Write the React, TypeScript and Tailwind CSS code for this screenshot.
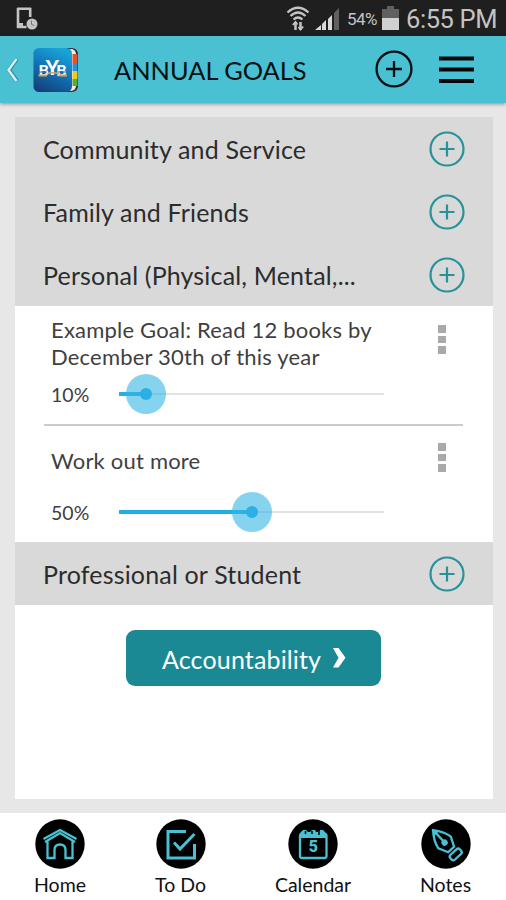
import clsx from 'clsx'
import type { ReactNode } from 'react'

type Goal = { title: string; percent: number }

const goals: Goal[] = [
  { title: 'Example Goal: Read 12 books by December 30th of this year', percent: 10 },
  { title: 'Work out more', percent: 50 },
]

function StatusBar() {
  return (
    <div className="flex h-9 items-center bg-[#1f1f1f] pl-4 pr-[9px] text-[#c4c4c4]">
      <svg width="22" height="24" viewBox="0 0 22 24" fill="none" className="mt-px">
        <path d="M1.200 1.800h14M2 1v20M1 20h9.500M14.200 1v9" stroke="#c4c4c4" strokeWidth="2.600" />
        <path d="M3 16h4v3H3z" fill="#c4c4c4" />
        <circle cx="16" cy="17" r="5.500" fill="#c4c4c4" />
        <path d="M15.500 13.500v4l3 1" stroke="#777" strokeWidth="1" />
      </svg>
      <svg width="26" height="26" viewBox="0 0 26 26" fill="none" stroke="#c4c4c4" strokeWidth="2.300" className="ml-[247px] -mt-px">
        <path d="M2.500 7.500Q13-2 23.500 7.500M5.500 11Q13 4 20.500 11M8.500 14.500Q13 10.500 17.500 14.500" />
        <path d="M10.500 25v-8M15.500 17v8" strokeWidth="2.500" />
        <path d="M7.800 20l2.700-3 2 2.500M13.500 22l2 2.500 2.700-3" strokeWidth="1.800" />
      </svg>
      <svg width="25" height="24" viewBox="0 0 25 24" className="ml-[4px] mt-px">
        <path d="M0 23L6 18v5zM7 17l4-4v10H7zM13 12l4-4v15h-4z" fill="#d8d8d8" />
        <path d="M19 6l5-5v22h-5z" fill="#606060" />
      </svg>
      <span className="ml-[7px] mt-[3px] w-[31px] whitespace-nowrap font-['Roboto'] text-[17px] tracking-[-0.5px]">54%</span>
      <svg width="17" height="24" viewBox="0 0 17 24" className="ml-[4px]">
        <path d="M5 0h7v3h5v10H0V3h5z" fill="#606060" />
        <path d="M0 12h17v12H0z" fill="#d0d0d0" />
      </svg>
      <span className="ml-auto mt-[3px] whitespace-nowrap font-['Roboto'] text-[25.500px] leading-none tracking-[-0.4px]">6:55 PM</span>
    </div>
  )
}

function Logo() {
  return (
    <svg width="46" height="46" viewBox="0 0 46 46" className="ml-[14px]">
      <defs>
        <linearGradient id="cover" x1="0.200" y1="1" x2="0.600" y2="0">
          <stop offset="0" stopColor="#153f78" />
          <stop offset="0.500" stopColor="#126fb5" />
          <stop offset="1" stopColor="#18a3d8" />
        </linearGradient>
      </defs>
      <rect x="8" y="1" width="37" height="44" rx="6" fill="#3b2a2a" />
      <rect x="8" y="2" width="35" height="42" rx="5" fill="#f1eee2" />
      <path d="M39.500 7h5v9h-5z" fill="#e8502c" />
      <path d="M39.500 16h5v8h-5z" fill="#2e8fd6" />
      <path d="M39.500 24h5v8h-5z" fill="#f4c71c" />
      <path d="M39.500 32h5v7h-5z" fill="#55ad3c" />
      <rect x="0.500" y="1" width="38.500" height="44" rx="5.500" fill="url(#cover)" />
      <text x="5.500" y="29" fontFamily="Lato" fontWeight="900" fontSize="15.500" fill="#fff">
        B<tspan dx="-3" dy="-1.500" fontSize="20">Y</tspan><tspan dx="-2.800" dy="1.500">B</tspan>
      </text>
      <path d="M5.500 25h8.500M25 25h9" stroke="#176fae" strokeWidth="1" />
      <path d="M5.500 28.500h8.500M25.500 28.500h8.500" stroke="#e0a052" strokeWidth="2" />
      <path d="M14 27q6-2.500 12 0" stroke="#e0a052" strokeWidth="1.300" fill="none" />
    </svg>
  )
}

function PlusCircle({ size, className }: { size: number; className?: string }) {
  return (
    <svg width={size} height={size} viewBox="0 0 36 36" fill="none" stroke="currentColor" strokeWidth="2.200" className={clsx('shrink-0', className)}>
      <circle cx="18" cy="18" r="16.500" />
      <path d="M18 10.500v15M10.500 18h15" />
    </svg>
  )
}

function Header() {
  return (
    <header className="relative z-10 flex h-[67px] items-center bg-[#4ac0d3] shadow-[0_1px_4px_rgba(0,0,0,0.4)]">
      <svg width="13" height="26" viewBox="0 0 13 26" fill="none" className="ml-[6px]">
        <path d="M11 2L3 13l8 11" stroke="#3c8e9b" strokeWidth="4" />
        <path d="M10.500 2L2.500 13l8 11" stroke="#d5f3f5" strokeWidth="2.400" />
      </svg>
      <Logo />
      <h1 className="ml-[35px] mt-[2px] whitespace-nowrap text-[25.400px] leading-none">ANNUAL GOALS</h1>
      <PlusCircle size={38} className="absolute left-[375px] top-[14px]" />
      <svg width="35" height="28" viewBox="0 0 35 28" className="absolute left-[439px] top-5">
        <path d="M0 .5h35v4H0zM0 11.500h35v4H0zM0 23h35v4H0z" fill="#050808" />
      </svg>
    </header>
  )
}

function CategoryRow({ name }: { name: string }) {
  return (
    <div className="flex h-[63px] items-center justify-between bg-[#d9d9d9] pl-7 pr-[28px]">
      <h2 className="mt-[2px] whitespace-nowrap text-[25px] leading-none tracking-[0.17px] text-[#2c2c2c]">{name}</h2>
      <PlusCircle size={36} className="text-[#26929a]" />
    </div>
  )
}

function Slider({ value }: { value: number }) {
  return (
    <div className="relative ml-[29px] h-10 w-[265px]">
      <div className="absolute inset-x-0 top-[19px] h-[2px] bg-[#e2e2e2]" />
      <div className="absolute left-0 top-[18px] h-1 bg-[#22b0e4]" style={{ width: `${value}%` }} />
      <div
        className="absolute top-0 flex size-10 -translate-x-1/2 items-center justify-center rounded-full bg-[#33b5e5]/60"
        style={{ left: `${value}%` }}
      >
        <div className="size-3 rounded-full bg-[#2bb0e5]" />
      </div>
    </div>
  )
}

function GoalItem({ goal, className, sliderClass, menuClass }: { goal: Goal; className: string; sliderClass: string; menuClass: string }) {
  return (
    <div className={clsx('relative pl-9', className)}>
      <p className="w-[345px] text-[22px] leading-[26.500px] tracking-[0.2px] text-[#404040]">{goal.title}</p>
      <div className={clsx('flex items-center', sliderClass)}>
        <span className="mt-[2px] w-[39px] whitespace-nowrap text-[19.500px] text-[#404040]">{goal.percent}%</span>
        <Slider value={goal.percent} />
      </div>
      <div className={clsx('absolute left-[423px] flex flex-col gap-[3px]', menuClass)}>
        <i className="size-[7.500px] bg-[#a9a9a9]" />
        <i className="size-[7.500px] bg-[#a9a9a9]" />
        <i className="size-[7.500px] bg-[#a9a9a9]" />
      </div>
    </div>
  )
}

function NavItem({ label, className, children }: { label: string; className: string; children: ReactNode }) {
  return (
    <div className={clsx('flex flex-col items-center', className)}>
      <svg width="50" height="50" viewBox="0 0 50 50" fill="none" stroke="#4ac0d3" strokeWidth="2.300">
        <circle cx="25" cy="25" r="24.700" fill="#000" stroke="none" />
        {children}
      </svg>
      <span className="mt-[4px] whitespace-nowrap text-[19.500px] leading-6 text-[#111]">{label}</span>
    </div>
  )
}

export default function App() {
  return (
    <div className="flex h-[900px] w-[506px] flex-col overflow-hidden bg-[#e7e7e7] font-['Lato',sans-serif] text-[#071012]">
      <StatusBar />
      <Header />
      <main className="mx-[15px] mt-[14px] h-[682px] w-[477.500px] shrink-0 bg-white">
        <CategoryRow name="Community and Service" />
        <CategoryRow name="Family and Friends" />
        <CategoryRow name="Personal (Physical, Mental,..." />
        <div className="h-[236px]">
          <GoalItem goal={goals[0]} className="h-[118px] pt-[11px]" sliderClass="mt-[4px]" menuClass="top-[19px]" />
          <div className="ml-[29px] h-[2px] w-[419px] bg-[#cbcbcb]" />
          <GoalItem goal={goals[1]} className="pt-[22px]" sliderClass="mt-[17px]" menuClass="top-[17px]" />
        </div>
        <CategoryRow name="Professional or Student" />
        <button className="ml-[111px] mt-[25px] flex h-[56px] w-[255px] items-center rounded-[9px] bg-[#1b8993] pl-[36px] text-[25px] text-white">
          <span className="mt-[3px] leading-none tracking-[0.15px]">Accountability</span>
          <svg width="13" height="20" viewBox="0 0 13 20" className="ml-3">
            <path d="M0 0h5.500L12.500 9.800 5.500 19.500H0L5.500 9.800z" fill="#fff" />
          </svg>
        </button>
      </main>
      <nav className="mt-[14px] flex h-[87px] shrink-0 bg-white pt-[6px]">
        <NavItem label="Home" className="w-[120px]">
          <path d="M8.500 20L25 11l16.500 9M10 23l15-9 15 9M12.500 22v17h7V31q0-5.500 5.500-5.500t5.500 5.500v8h7V22" />
        </NavItem>
        <NavItem label="To Do" className="w-[121px]">
          <path d="M30 12.500H12v26.500h26.500V25M18 23.500l6 6.500L38.500 15" strokeWidth="3" />
        </NavItem>
        <NavItem label="Calendar" className="w-[144px]">
          <rect x="12" y="15" width="26.500" height="24" rx="2" />
          <path d="M12 14l3-3h3l2 2h2l2-2h3l1 2h2l2-2h3l3 3v5H12z" fill="#4ac0d3" stroke="none" />
          <path d="M17.500 12v3M24 12v3M31 11v5" stroke="#000" strokeWidth="1.500" />
          <text x="25.300" y="32.500" textAnchor="middle" fontFamily="Roboto" fontWeight="900" fontSize="16" fill="#4ac0d3" stroke="none">5</text>
        </NavItem>
        <NavItem label="Notes" className="w-[121px]">
          <g transform="rotate(-43 25 25)">
            <path d="M25 6q7.500 9 8.500 17l-4.500 9.500h-8L16.500 23q1-8 8.500-17zM25 7v14" />
            <path d="M25 6l3.500 5h-7z" fill="#4ac0d3" stroke="none" />
            <circle cx="25" cy="23" r="2" fill="#4ac0d3" />
            <rect x="18.500" y="36" width="13" height="6.500" rx="2.500" />
          </g>
        </NavItem>
      </nav>
    </div>
  )
}
